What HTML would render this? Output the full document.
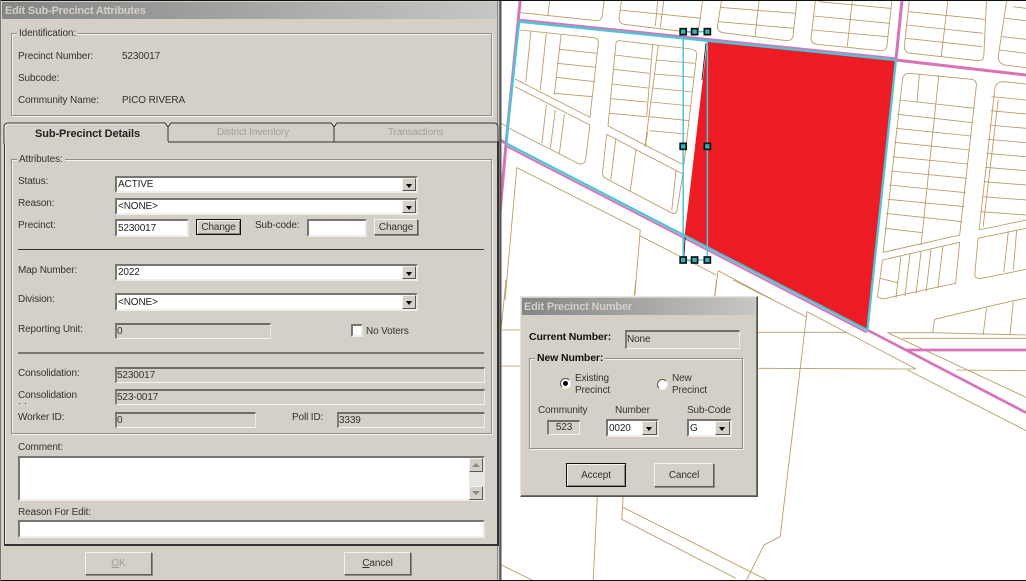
<!DOCTYPE html>
<html><head><meta charset="utf-8">
<style>
html,body{margin:0;padding:0;width:1026px;height:581px;overflow:hidden;background:#fff}
body{position:relative;font-family:"Liberation Sans",sans-serif;font-size:10px;letter-spacing:-.13px;color:#333}
div{position:absolute;box-sizing:border-box}
.t{white-space:nowrap;line-height:12px;height:12px;margin-top:1px}
.b{font-weight:bold;color:#111;margin-top:0;font-size:10.5px}
.title{background:linear-gradient(90deg,#858585,#c6c6c4);color:#d4d0c8;font-weight:bold;font-size:11px;letter-spacing:-.2px;line-height:19px;padding-left:3px;white-space:nowrap}
.grp{border:1px solid #8f8c86;box-shadow:1px 1px 0 #f4f3ef,inset 1px 1px 0 #f4f3ef}
.lbl{background:#d4d0c8;padding:0 2px}
.in{background:#fff;border:2px solid;border-color:#777570 #e8e6e0 #f0eee8 #777570;color:#222;line-height:14px;padding-left:1px;white-space:nowrap;overflow:hidden}
.ro{background:#d4d0c8;border:1px solid;border-top:2px solid #6e6c67;border-left:2px solid #7d7b75;border-color:#6e6c67 #eeece6 #f4f2ec #7d7b75;color:#333;line-height:14px;white-space:nowrap;overflow:hidden}
.arr{background:#d4d0c8;border:1px solid;border-color:#f4f2ec #555 #555 #f4f2ec;right:0;top:0;bottom:0;width:14px}
.arr:after{content:"";position:absolute;left:3px;top:5px;border-left:3.5px solid transparent;border-right:3.5px solid transparent;border-top:4px solid #000}
.btn{background:#d4d0c8;border:1px solid;border-color:#f4f2ec #5d5b57 #5d5b57 #f4f2ec;box-shadow:1px 1px 0 #8a8883;text-align:center;color:#333;white-space:nowrap}
.def{border:1px solid #111;box-shadow:inset 1px 1px 0 #f4f2ec,inset -1px -1px 0 #8a8883}
</style></head><body>

<svg style="position:absolute;left:0;top:0" width="1026" height="581" viewBox="0 0 1026 581">
<rect width="1026" height="581" fill="#fff"/>
<g transform="translate(500,0) scale(.3355,.33333)" fill="none" stroke="#bb9865" stroke-width="2.6">
<path d="M62,38 L290,62 Q303,62 305,45 L310,3 M148,3 L143,45"/>
<path d="M362,3 L355,55 Q354,70 370,73 L590,100 L604,3 M358,30 L600,55 M470,3 L463,78 M488,3 L478,82"/>
<path d="M660,3 L648,80 Q648,95 665,98 L855,122 Q870,122 873,110 L885,3 M655,22 L880,40 M652,65 L875,85 M772,3 L760,110"/>
<path d="M940,3 L927,115 Q927,130 945,133 L1135,152 Q1150,152 1153,140 L1168,3 M950,5 L1165,25 M935,48 L1160,70 M930,90 L1155,110 M1050,3 L1035,140"/>
<path d="M1220,3 L1205,140 Q1205,158 1225,160 L1425,182 Q1440,182 1442,170 L1450,3 M1218,35 L1445,58 M1213,75 L1440,100 M1210,115 L1437,140 M1335,3 L1315,170"/>
<path d="M1510,3 L1485,170 Q1485,190 1505,195 L1568,203 M1505,55 L1568,62 M1497,110 L1568,118 M1490,150 L1568,160 M1530,20 L1568,25"/>
<path d="M60,90 L280,113 Q295,115 293,130 L268,352 L45,237 M92,95 L77,245 M138,100 L120,270 M182,105 L162,283 M175,148 L290,160 M170,190 L287,202 M168,232 L282,245 M163,280 L275,290"/>
<path d="M45,260 L268,375 L255,480 Q250,497 232,490 L28,385 M138,315 L125,430 M165,330 L150,445 M192,342 L177,460"/>
<path d="M355,122 L570,147 Q588,150 586,165 L548,495 L322,378 L345,135 Q345,122 355,122 M472,135 L432,440 M455,135 L437,350 M342,165 L448,178 M338,208 L445,220 M334,252 L442,264 M330,296 L438,306 M326,340 L436,350 M465,180 L580,190 M460,222 L578,232 M455,264 L574,276 M450,306 L570,318 M445,350 L565,362 M445,392 L555,402 M440,395 L433,440"/>
<path d="M318,403 L545,522 L527,635 Q520,645 510,638 L315,535 Q303,528 306,515 Z M345,418 L330,540 M405,450 L388,575 M525,510 L512,630"/>
<path d="M0,368 L18,378 M50,503 L418,690 L402,885 M50,503 L15,900 M418,708 L645,825 M650,812 L640,890 M650,812 L815,900"/>
<path d="M1200,235 Q1205,218 1220,220 L1405,238 Q1420,240 1420,255 L1370,705 L1142,757 Z M1190,300 L1415,325 M1185,343 L1410,368 M1180,385 L1405,408 M1175,427 L1400,450 M1170,470 L1395,492 M1165,513 L1392,535 M1160,555 L1388,578 M1155,598 L1384,620 M1150,640 L1378,665 M1146,685 L1260,698 M1308,225 L1255,735 M1250,222 L1243,305"/>
<path d="M1428,690 L1475,265 Q1480,245 1500,245 L1568,252 M1465,290 L1568,300 M1462,332 L1568,342 M1458,375 L1568,385 M1454,418 L1568,428 M1450,460 L1568,470 M1446,502 L1568,512 M1442,545 L1568,555 M1438,590 L1568,600 M1432,635 L1568,645 M1428,690 L1568,660 M1485,300 L1440,680"/>
<path d="M1140,780 L1370,727 L1358,850 L1140,897 L1125,890 Z M1195,770 L1180,895 M1222,762 L1207,888 M1255,755 L1240,882 M1285,748 L1270,875 M1320,740 L1305,865 M1132,835 L1185,848"/>
<path d="M1425,715 L1568,685 M1425,715 L1415,825 Q1418,838 1435,835 L1568,808 M1515,695 L1502,815 M1540,690 L1530,810"/>
</g>
<g transform="translate(500,280) scale(.3355,.33333)" fill="none" stroke="#bb9865" stroke-width="2.6">
<path d="M0,150 L60,150 M0,258 L60,258 M405,0 L400,48 M645,0 L640,48 M18,0 L3,150"/>
<path d="M770,157 L1035,157 M770,265 L1240,267 M915,95 L1240,267 M915,95 L835,770 L787,795 L735,900 M695,0 L912,110"/>
<path d="M1155,158 L1568,352 M1155,158 L1290,158 L1568,165 M1200,175 L1568,175 M1215,270 L1568,452 M1360,270 L1568,272 M1295,118 L1530,62 L1568,55 M1295,118 L1290,158 M1450,85 L1440,165 M1530,65 L1520,165"/>
<path d="M290,650 L278,900 M367,650 L363,720 M367,682 L795,900 M363,718 L703,895 M0,853 L95,900"/>
</g>
<g transform="translate(500,0) scale(.3355,.33333)" fill="none">
<polygon points="618,122 1180,180 1095,990 550,710" fill="#ed1c24"/>
<path d="M60,3 L18,430 L0,640 M0,420 L18,430" stroke="#d873b8" stroke-width="9"/>
<path d="M1198,3 L1180,180 L1568,225" stroke="#d873b8" stroke-width="9"/>
<path d="M57,59 L1180,175" stroke="#d873b8" stroke-width="6"/>
<path d="M16,437 L1093,997" stroke="#d873b8" stroke-width="6"/>
<path d="M1095,990 L1568,1238 M1210,1050 L1568,1050" stroke="#d873b8" stroke-width="8"/>
<path d="M57,65 L1180,180 L1095,990 L18,430 Z" stroke="#4cc5d5" stroke-width="7"/>
<path d="M546,95 L618,95 M546,780 L618,780" stroke="#4cc5d5" stroke-width="4"/>
<path d="M614,130 L602,240 M552,712 L548,770" stroke="#111" stroke-width="2.5"/>
<path d="M546,95 L546,780 M618,122 L618,780" stroke="#4cc5d5" stroke-width="4.5"/>
<g fill="#2cb5bd" stroke="#111" stroke-width="5">
<rect x="537" y="86" width="18" height="18"/><rect x="571" y="86" width="18" height="18"/><rect x="609" y="86" width="18" height="18"/>
<rect x="537" y="430" width="18" height="18"/><rect x="609" y="430" width="18" height="18"/>
<rect x="537" y="771" width="18" height="18"/><rect x="571" y="771" width="18" height="18"/><rect x="609" y="771" width="18" height="18"/>
</g>
</g>
<rect x="500" y="0" width="1.5" height="581" fill="#555"/>
<rect x="0" y="0" width="1026" height="1" fill="#111"/>
<rect x="0" y="580" width="1026" height="1" fill="#111"/>
</svg>

<!-- LEFT PANEL -->
<div style="left:0;top:1px;width:500px;height:579px;background:#d4d0c8;border-right:1px solid #777"></div>
<div style="left:497px;top:1px;width:1px;height:579px;background:#8a8883"></div>
<div style="left:0;top:0;width:1px;height:581px;background:#777"></div>
<div class="title" style="left:2px;top:2px;width:495px;height:17px">Edit Sub-Precinct Attributes</div>

<div class="grp" style="left:11px;top:33px;width:481px;height:83px"></div>
<div class="t lbl" style="left:17px;top:27px">Identification:</div>
<div class="t" style="left:18px;top:50px">Precinct Number:</div>
<div class="t" style="left:122px;top:50px">5230017</div>
<div class="t" style="left:18px;top:72px">Subcode:</div>
<div class="t" style="left:18px;top:94px">Community Name:</div>
<div class="t" style="left:122px;top:94px">PICO RIVERA</div>

<!-- tab page -->
<div style="left:4px;top:141px;width:495px;height:405px;border:1px solid #222;border-width:1px 2px 2px 1px;border-color:#222 #333 #333 #333;box-shadow:inset 1px 0 0 #f4f2ec"></div>
<svg style="position:absolute;left:0;top:120px" width="500" height="24" viewBox="0 0 500 24">
<path d="M4,24 L4,7 Q4,3 9,3 L165,3 L168,7 L168,22" fill="#d4d0c8" stroke="none"/>
<path d="M168,22 L168,7 L171,3 L331,3 L334,7 L334,22 Z" fill="#d4d0c8"/>
<path d="M334,22 L334,7 L337,3 L494,3 Q498,3 498,8 L498,22 Z" fill="#d4d0c8"/>
<path d="M4,24 L4,7 Q4,3 9,3 L165,3 L168,7 L168,22 L498,22 L498,8 Q498,3 494,3 L337,3 L334,7 L334,22 M334,7 L331,3 L171,3 L168,7" fill="none" stroke="#333" stroke-width="1"/>
<path d="M5,24 L5,8 Q5,4 9,4 L164,4" fill="none" stroke="#f4f2ec" stroke-width="1"/>
<rect x="5" y="21" width="163" height="3" fill="#d4d0c8"/>
</svg>
<div class="t b" style="left:35px;top:128px;font-size:11px;letter-spacing:-.1px;color:#222">Sub-Precinct Details</div>
<div class="t" style="left:217px;top:126px;color:#a09e98">District Inventory</div>
<div class="t" style="left:388px;top:126px;color:#a09e98">Transactions</div>

<div class="grp" style="left:11px;top:159px;width:481px;height:275px"></div>
<div class="t lbl" style="left:17px;top:153px">Attributes:</div>

<div class="t" style="left:18px;top:175px">Status:</div>
<div class="in" style="left:115px;top:176px;width:303px;height:17px">ACTIVE<div class="arr"></div></div>
<div class="t" style="left:18px;top:197px">Reason:</div>
<div class="in" style="left:115px;top:198px;width:303px;height:17px">&lt;NONE&gt;<div class="arr"></div></div>
<div class="t" style="left:18px;top:219px">Precinct:</div>
<div class="in" style="left:115px;top:219px;width:74px;height:18px;line-height:15px">5230017</div>
<div class="btn def" style="left:196px;top:219px;width:45px;height:16px;line-height:15px">Change</div>
<div class="t" style="left:255px;top:219px">Sub-code:</div>
<div class="in" style="left:307px;top:219px;width:60px;height:18px"></div>
<div class="btn" style="left:374px;top:219px;width:44px;height:16px;line-height:15px">Change</div>

<div style="left:18px;top:249px;width:466px;height:1px;background:#333"></div>

<div class="t" style="left:18px;top:264px">Map Number:</div>
<div class="in" style="left:115px;top:264px;width:303px;height:17px">2022<div class="arr"></div></div>
<div class="t" style="left:18px;top:293px">Division:</div>
<div class="in" style="left:115px;top:293px;width:303px;height:18px;line-height:15px">&lt;NONE&gt;<div class="arr"></div></div>
<div class="t" style="left:18px;top:323px">Reporting Unit:</div>
<div class="ro" style="left:115px;top:323px;width:156px;height:16px">0</div>
<div class="in" style="left:351px;top:324px;width:12px;height:13px"></div>
<div class="t" style="left:366px;top:325px">No Voters</div>

<div style="left:18px;top:352px;width:466px;height:2px;background:#77756f"></div>

<div class="t" style="left:18px;top:367px">Consolidation:</div>
<div class="ro" style="left:115px;top:367px;width:370px;height:16px">5230017</div>
<div class="t" style="left:18px;top:389px">Consolidation</div>
<div style="left:19px;top:403px;width:1px;height:1px;background:#555"></div>
<div style="left:25px;top:403px;width:1px;height:1px;background:#555"></div>
<div class="ro" style="left:115px;top:389px;width:370px;height:16px">523-0017</div>
<div class="t" style="left:18px;top:411px">Worker ID:</div>
<div class="ro" style="left:115px;top:412px;width:141px;height:16px">0</div>
<div class="t" style="left:292px;top:411px">Poll ID:</div>
<div class="ro" style="left:337px;top:412px;width:148px;height:16px">3339</div>

<div class="t" style="left:18px;top:441px">Comment:</div>
<div class="in" style="left:18px;top:456px;width:467px;height:45px"></div>
<div style="left:469px;top:458px;width:14px;height:41px;background:#e8e6e0"></div>
<div class="btn" style="left:469px;top:458px;width:14px;height:14px;box-shadow:none"></div>
<div style="left:472px;top:463px;border-left:4px solid transparent;border-right:4px solid transparent;border-bottom:4px solid #8a8883"></div>
<div class="btn" style="left:469px;top:486px;width:14px;height:14px;box-shadow:none"></div>
<div style="left:472px;top:491px;border-left:4px solid transparent;border-right:4px solid transparent;border-top:4px solid #8a8883"></div>
<div class="t" style="left:18px;top:506px">Reason For Edit:</div>
<div class="in" style="left:18px;top:520px;width:467px;height:18px"></div>

<div class="btn" style="left:85px;top:552px;width:67px;height:23px;line-height:22px;color:#a09e98"><u>O</u>K</div>
<div class="btn" style="left:344px;top:552px;width:67px;height:23px;line-height:22px"><u>C</u>ancel</div>

<!-- SMALL DIALOG -->
<div style="left:520px;top:296px;width:238px;height:201px;background:#d4d0c8;border:1px solid;border-color:#e6e4de #55534f #55534f #e6e4de;box-shadow:inset -1px -1px 0 #77756f"></div>
<div class="title" style="left:522px;top:298px;width:233px;height:17px;padding-left:2px">Edit Precinct Number</div>
<div class="t b" style="left:529px;top:331px">Current Number:</div>
<div class="ro" style="left:625px;top:330px;width:115px;height:19px;line-height:15px">None</div>
<div class="grp" style="left:529px;top:358px;width:214px;height:91px"></div>
<div class="t b lbl" style="left:535px;top:352px">New Number:</div>
<div style="left:560px;top:378px;width:11px;height:11px;border-radius:50%;background:#fff;border:1px solid;border-color:#55534f #eee #eee #55534f"></div>
<div style="left:563px;top:381px;width:5px;height:5px;border-radius:50%;background:#000"></div>
<div class="t" style="left:575px;top:372px">Existing</div>
<div class="t" style="left:575px;top:384px">Precinct</div>
<div style="left:657px;top:379px;width:11px;height:11px;border-radius:50%;background:#fff;border:1px solid;border-color:#55534f #eee #eee #55534f"></div>
<div class="t" style="left:672px;top:372px">New</div>
<div class="t" style="left:672px;top:384px">Precinct</div>
<div class="t" style="left:538px;top:404px">Community</div>
<div class="t" style="left:615px;top:404px">Number</div>
<div class="t" style="left:687px;top:404px">Sub-Code</div>
<div class="ro" style="left:547px;top:420px;width:33px;height:15px;text-align:center;line-height:11px">523</div>
<div class="in" style="left:606px;top:419px;width:53px;height:18px;line-height:15px">0020<div class="arr" style="width:15px"></div></div>
<div class="in" style="left:687px;top:419px;width:45px;height:18px;line-height:15px">G<div class="arr" style="width:15px"></div></div>
<div class="btn def" style="left:566px;top:463px;width:60px;height:24px;line-height:23px">Accept</div>
<div class="btn" style="left:654px;top:463px;width:60px;height:24px;line-height:23px">Cancel</div>
</body></html>
